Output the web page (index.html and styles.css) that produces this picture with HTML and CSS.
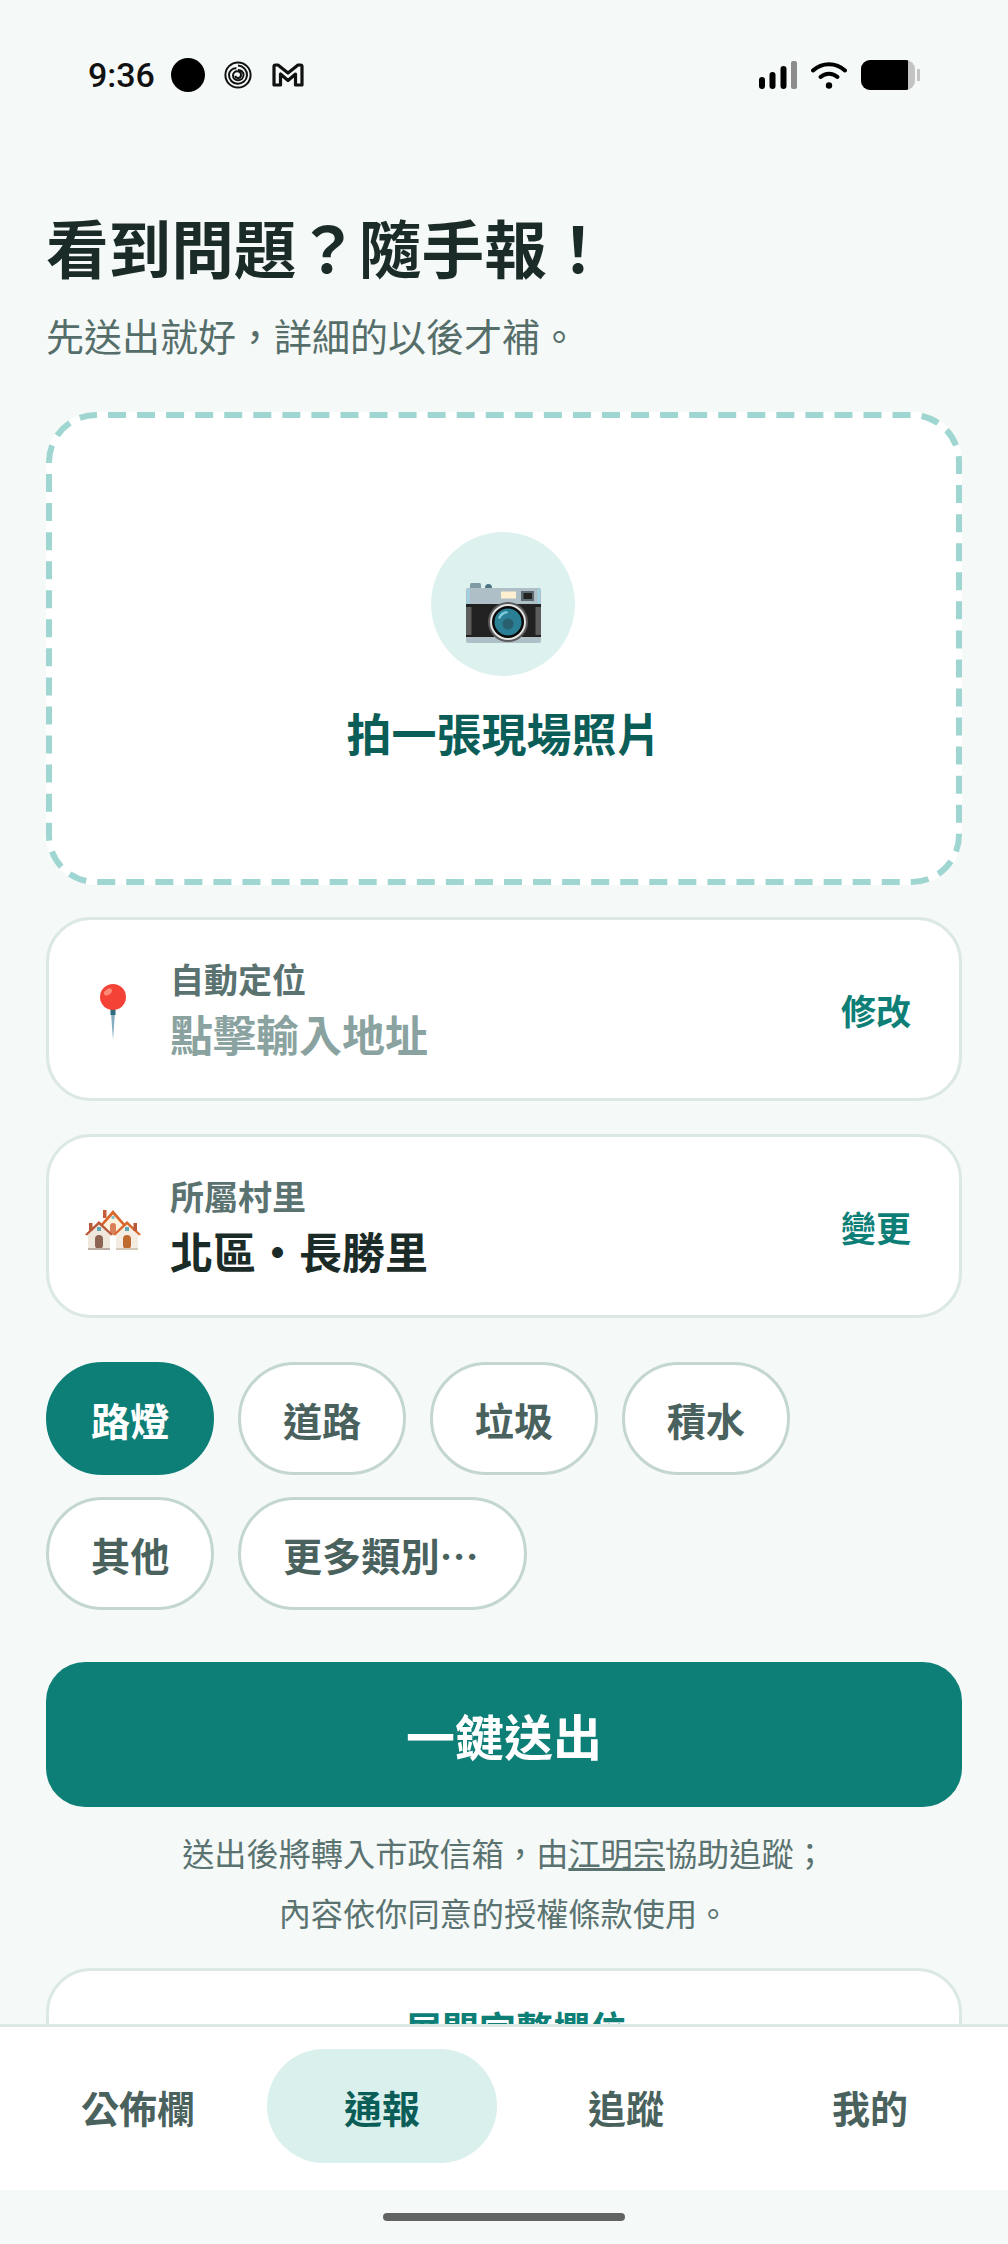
FILE: index.html
```html
<!doctype html>
<html lang="zh-Hant">

<head>
    <meta charset="utf-8">
    <title>通報</title>
    <link rel="stylesheet" href="styles.css">
</head>

<body>
    <div class="status">
        <div class="status-left">
            <span class="time">9:36</span>
            <span class="dot"></span>
            <svg class="ic-spiral" viewBox="0 0 28 28" fill="none" stroke="#111" stroke-width="2">
                <circle cx="14" cy="14" r="12.6"/>
                <path d="M14 4.500a9.500 9.500 0 0 1 9 10c-.4 5-4.600 8.500-9.500 8.300-5-.3-8.700-4.300-8.500-9 .2-3.800 3.500-6.800 7.500-6.500"/>
                <path d="M14 9c3-.3 5.500 2 5.500 5s-2.400 5.300-5.500 5.300-5-2.200-5-4.800 2-4.300 4.300-4.200 3.700 1.700 3.700 3.700-1.400 3-3 3-2.500-1-2.500-2.300"/>
            </svg>
            <svg class="ic-m" viewBox="0 0 32 24" fill="none" stroke="#111" stroke-width="3.200" stroke-linejoin="round">
                <path d="M2 22V3.500q0-1.500 1.500-1.500h2.500L16 10 26 2h2.500q1.500 0 1.500 1.500V22h-6.500V11L16 17.500 8.500 11V22z"/>
            </svg>
        </div>
        <div class="status-right">
            <svg class="ic-signal" viewBox="0 0 38 28">
                <rect x="0" y="16" width="6" height="12" rx="3" fill="#000"/>
                <rect x="10.500" y="11" width="6" height="17" rx="3" fill="#000"/>
                <rect x="21.500" y="5" width="6" height="23" rx="3" fill="#000"/>
                <rect x="32" y="0" width="6" height="28" rx="2" fill="#8c8c8c"/>
            </svg>
            <svg class="ic-wifi" viewBox="0 0 36 28" fill="none" stroke="#000" stroke-width="4" stroke-linecap="round">
                <path d="M2 9.500C11 1 25 1 34 9.500"/>
                <path d="M9.500 16c5-4.500 12-4.500 17 0"/>
                <circle cx="18" cy="24.500" r="3.200" fill="#000" stroke="none"/>
            </svg>
            <div class="battery"><div class="battery-fill"></div></div>
            <div class="battery-tip"></div>
        </div>
    </div>

    <main class="content">
        <h1 class="title">看到問題？隨手報！</h1>
        <p class="subtitle">先送出就好，詳細的以後才補。</p>

        <div class="upload">
            <svg class="upload-dash" viewBox="0 0 916 473">
                <rect x="3" y="3" width="910" height="467" rx="47" fill="none" stroke="#a0d6d1" stroke-width="6" stroke-dasharray="18 11.058" stroke-dashoffset="-12"/>
            </svg>
            <div class="upload-circle">
                <svg class="ic-camera" viewBox="0 0 75 60">
                    <rect x="4" y="0" width="11" height="7" rx="1.500" fill="#7f9aa3"/>
                    <path d="M19 5q0-4 3.500-4t3.500 4z" fill="#4d7484"/>
                    <path d="M17 5h11l1.500 2h-14z" fill="#8ba3ac"/>
                    <rect x="0" y="5" width="75" height="55" rx="2" fill="#aebfc7"/>
                    <rect x="1" y="6" width="2.500" height="15" fill="#9fd3e3"/>
                    <rect x="71.500" y="6" width="2.500" height="15" fill="#9fd3e3"/>
                    <rect x="35" y="8.500" width="15" height="7" fill="#fff0d2"/>
                    <rect x="55" y="8" width="13" height="10" fill="#5c6a70"/>
                    <rect x="57.500" y="10" width="8.500" height="6" fill="#222"/>
                    <rect x="0" y="21" width="75" height="33" fill="#212121"/>
                    <rect x="0" y="24" width="5.500" height="28" fill="#5d5d5d"/>
                    <rect x="69.500" y="24" width="5.500" height="28" fill="#5d5d5d"/>
                    <circle cx="42" cy="39" r="20" fill="#5a5a5a"/>
                    <circle cx="42" cy="39" r="18" fill="#e4e4e4"/>
                    <circle cx="42" cy="39" r="16" fill="#0a0a0a"/>
                    <circle cx="42" cy="39" r="13.500" fill="#2b7f95"/>
                    <circle cx="42" cy="41" r="5.500" fill="#27606f"/>
                    <path d="M32 35q2-6 9-7l1 2q-6 1-8 6z" fill="#7ecddb"/>
                </svg>
            </div>
            <div class="upload-text">拍一張現場照片</div>
        </div>

        <div class="card">
            <div class="card-icon">
                <svg class="ic-pin" viewBox="0 0 26 56">
                    <path d="M10.500 22h5L13 56z" fill="#84adc0"/>
                    <rect x="10.500" y="25" width="5" height="6" fill="#2f6a80"/>
                    <circle cx="13" cy="13" r="13" fill="#f44336"/>
                    <ellipse cx="8" cy="8" rx="4.500" ry="2.800" fill="#ff8a75" transform="rotate(-35 8 8)"/>
                </svg>
            </div>
            <div class="card-body">
                <div class="card-label">自動定位</div>
                <div class="card-value placeholder">點擊輸入地址</div>
            </div>
            <div class="card-action">修改</div>
        </div>

        <div class="card">
            <div class="card-icon">
                <svg class="ic-houses" viewBox="0 0 56 42">
                    <path d="M19 14L28 4l9 10v14H19z" fill="#fff3e0"/>
                    <path d="M15 17L28 2l13 15-2.500 1L28 6.500 17.500 18z" fill="#d9682f"/>
                    <rect x="18" y="2" width="3.500" height="8" fill="#c75b39"/>
                    <rect x="25" y="15" width="6" height="11" rx="3" fill="#d9805a"/>
                    <rect x="26.500" y="8" width="3" height="3" fill="#7fc4c9"/>
                    <path d="M3 24l11-10 11 10v17H3z" fill="#efe6dc"/>
                    <path d="M0 26.500L14 13l14 13.500-2 1L14 16.500 2 27.500z" fill="#b8593a"/>
                    <rect x="4" y="15" width="3.500" height="8" fill="#b8593a"/>
                    <rect x="10" y="27" width="8" height="14" rx="4" fill="#8d6351"/>
                    <rect x="12" y="19" width="4" height="4" fill="#5fa7b5"/>
                    <rect x="3" y="40" width="22" height="2" fill="#bdaea5"/>
                    <path d="M31 24l11-10 11 10v17H31z" fill="#f4ece2"/>
                    <path d="M28 26.500l14-13.500 14 13.500-2 1L42 16.500 30 27.500z" fill="#d9682f"/>
                    <rect x="48.500" y="15" width="3.500" height="8" fill="#b8593a"/>
                    <rect x="38" y="27" width="8" height="14" rx="4" fill="#bf6a2e"/>
                    <rect x="40" y="19" width="4" height="4" fill="#5fa7b5"/>
                    <rect x="31" y="40" width="22" height="2" fill="#d3c9b8"/>
                </svg>
            </div>
            <div class="card-body">
                <div class="card-label">所屬村里</div>
                <div class="card-value">北區・長勝里</div>
            </div>
            <div class="card-action">變更</div>
        </div>

        <div class="chips">
            <span class="chip active">路燈</span>
            <span class="chip">道路</span>
            <span class="chip">垃圾</span>
            <span class="chip">積水</span>
            <span class="chip">其他</span>
            <span class="chip">更多類別⋯</span>
        </div>

        <div class="submit">一鍵送出</div>

        <p class="note">送出後將轉入市政信箱，由<u>江明宗</u>協助追蹤；<br>內容依你同意的授權條款使用。</p>

        <div class="expand">展開完整欄位</div>
    </main>

    <nav class="nav">
        <div class="nav-item">公佈欄</div>
        <div class="nav-item active">通報</div>
        <div class="nav-item">追蹤</div>
        <div class="nav-item">我的</div>
    </nav>
    <div class="home"><div class="home-bar"></div></div>
</body>

</html>
```

FILE: styles.css
```css
* {
    margin: 0;
    box-sizing: border-box;
}

html,
body {
    height: 100%;
}

body {
    width: 1008px;
    height: 2244px;
    overflow: hidden;
    display: flex;
    flex-direction: column;
    background: #f5f9f8;
    color: #1a2b28;
    font-family: "Noto Sans CJK TC", "Noto Sans", sans-serif;
}

/* status bar */
.status {
    flex: none;
    height: 130px;
    padding: 55px 88px 0;
    display: flex;
    justify-content: space-between;
    align-items: flex-start;
}

.status-left,
.status-right {
    display: flex;
    align-items: center;
    height: 40px;
}

.time {
    font-family: "Roboto", sans-serif;
    font-size: 34px;
    font-weight: 500;
    color: #111;
    width: 83px;
}

.dot {
    width: 34px;
    height: 34px;
    border-radius: 50%;
    background: #000;
}

.ic-spiral {
    width: 28px;
    height: 28px;
    margin-left: 19px;
}

.ic-m {
    width: 32px;
    height: 24px;
    margin-left: 20px;
}

.ic-signal {
    width: 38px;
    height: 28px;
}

.ic-wifi {
    width: 36px;
    height: 28px;
    margin-left: 14px;
}

.battery {
    width: 54px;
    height: 30px;
    margin-left: 14px;
    border-radius: 9px;
    background: #c4c4c4;
    overflow: hidden;
}

.battery-fill {
    width: 47px;
    height: 100%;
    background: #000;
}

.battery-tip {
    width: 3px;
    height: 12px;
    margin-left: 2px;
    background: #c4c4c4;
}

/* main column */
.content {
    flex: 1;
    min-height: 0;
    overflow: hidden;
    padding: 76px 46px 0;
}

.title {
    font-size: 62.600px;
    line-height: 80px;
    font-weight: 700;
    color: #1a2b28;
}

.subtitle {
    margin-top: 21px;
    font-size: 38px;
    line-height: 56px;
    color: #566e6a;
}

.upload {
    position: relative;
    margin-top: 49px;
    height: 473px;
    border-radius: 50px;
    background: #fff;
    display: flex;
    flex-direction: column;
    align-items: center;
    padding-top: 6px;
}

.upload-dash {
    position: absolute;
    top: 0;
    left: 0;
    width: 100%;
    height: 100%;
}

.upload-circle {
    margin-top: 114px;
    margin-right: 2px;
    width: 144px;
    height: 144px;
    padding-top: 18px;
    border-radius: 50%;
    background: #ddf2ef;
    display: flex;
    align-items: center;
    justify-content: center;
}

.ic-camera {
    width: 75px;
    height: 60px;
}

.upload-text {
    margin-top: 26px;
    font-size: 45px;
    line-height: 62px;
    font-weight: 700;
    color: #0b5e57;
}

.card {
    margin-top: 33px;
    height: 184px;
    padding: 0 48px 0 36px;
    border: 3px solid #dbe8e5;
    border-radius: 45px;
    background: #fff;
    display: flex;
    align-items: center;
}

.upload + .card {
    margin-top: 32px;
}

.card-icon {
    width: 56px;
    margin-top: 5px;
    display: flex;
    justify-content: center;
    flex: none;
}

.ic-pin {
    width: 26px;
    height: 56px;
}

.ic-houses {
    width: 56px;
    height: 42px;
}

.card-body {
    flex: 1;
    margin-left: 29px;
}

.card-label {
    font-size: 34px;
    line-height: 48px;
    font-weight: 700;
    color: #5a7370;
}

.card-value {
    font-size: 43px;
    line-height: 60px;
    font-weight: 700;
    color: #1a2b28;
}

.card-value.placeholder {
    color: #8aa3a0;
}

.card-action {
    font-size: 35px;
    font-weight: 700;
    color: #0d7f77;
}

.chips {
    margin-top: 44px;
    display: flex;
    flex-wrap: wrap;
    gap: 22px 23.500px;
}

.chip {
    height: 113px;
    padding: 0 42px;
    border: 3px solid #c3d6d2;
    border-radius: 57px;
    background: #fff;
    display: flex;
    align-items: center;
    font-size: 39.200px;
    font-weight: 700;
    color: #4a625e;
}

.chip:last-child {
    padding-right: 45px;
}

.chip.active {
    background: #0d7f77;
    border-color: #0d7f77;
    color: #fff;
}

.submit {
    margin-top: 52px;
    height: 145px;
    border-radius: 39px;
    background: #0d7f77;
    color: #fff;
    display: flex;
    align-items: center;
    justify-content: center;
    font-size: 49px;
    font-weight: 700;
}

.note {
    margin-top: 15px;
    text-align: center;
    font-size: 32.200px;
    line-height: 60px;
    color: #5a7370;
}

.expand {
    margin-top: 26px;
    height: 120px;
    padding: 30px 0 0 24px;
    border: 3px solid #dbe8e5;
    border-radius: 45px;
    background: #fff;
    text-align: center;
    font-size: 37px;
    font-weight: 700;
    color: #0d7f77;
}

/* bottom nav */
.nav {
    flex: none;
    height: 166px;
    padding: 22px 16px 27px;
    border-top: 3px solid #dbe8e5;
    background: #fff;
    display: grid;
    grid-template-columns: repeat(4, 1fr);
}

.nav-item {
    display: flex;
    align-items: center;
    justify-content: center;
    border-radius: 57px;
    font-size: 38px;
    font-weight: 700;
    color: #4a625e;
}

.nav-item.active {
    margin: 0 7px;
    background: #d9f0ed;
    color: #0b5e57;
}

.home {
    flex: none;
    height: 54px;
    padding-top: 23px;
}

.home-bar {
    width: 242px;
    height: 8px;
    margin: 0 auto;
    border-radius: 4px;
    background: #626463;
}
```
